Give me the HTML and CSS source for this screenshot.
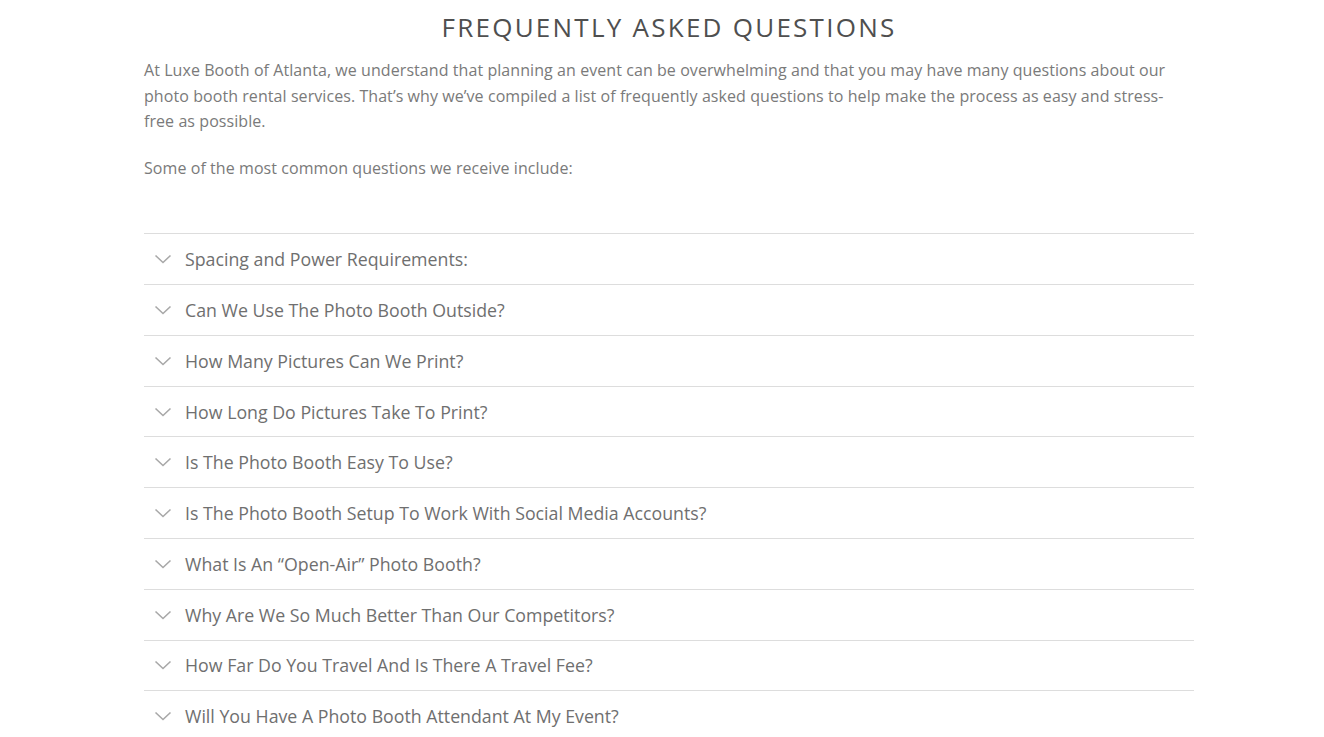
FILE: index.html
```html
<!DOCTYPE html>
<html lang="en">
<head>
<meta charset="utf-8">
<title>FAQ</title>
<link rel="stylesheet" href="styles.css">
</head>
<body>
<section class="faq">
  <h2 class="faq-title">FREQUENTLY ASKED QUESTIONS</h2>
  <p class="faq-text">At Luxe Booth of Atlanta, we understand that planning an event can be overwhelming and that you may have many questions about our photo booth rental services. That’s why we’ve compiled a list of frequently asked questions to help make the process as easy and stress-free as possible.</p>
  <p class="faq-text">Some of the most common questions we receive include:</p>
  <div class="accordion">
    <div class="item"><svg class="chev" viewBox="0 0 18 10"><path d="M1.5 1.5 L9 8.5 L16.5 1.5" /></svg><span>Spacing and Power Requirements:</span></div>
    <div class="item"><svg class="chev" viewBox="0 0 18 10"><path d="M1.5 1.5 L9 8.5 L16.5 1.5" /></svg><span>Can We Use The Photo Booth Outside?</span></div>
    <div class="item"><svg class="chev" viewBox="0 0 18 10"><path d="M1.5 1.5 L9 8.5 L16.5 1.5" /></svg><span>How Many Pictures Can We Print?</span></div>
    <div class="item"><svg class="chev" viewBox="0 0 18 10"><path d="M1.5 1.5 L9 8.5 L16.5 1.5" /></svg><span>How Long Do Pictures Take To Print?</span></div>
    <div class="item"><svg class="chev" viewBox="0 0 18 10"><path d="M1.5 1.5 L9 8.5 L16.5 1.5" /></svg><span>Is The Photo Booth Easy To Use?</span></div>
    <div class="item"><svg class="chev" viewBox="0 0 18 10"><path d="M1.5 1.5 L9 8.5 L16.5 1.5" /></svg><span>Is The Photo Booth Setup To Work With Social Media Accounts?</span></div>
    <div class="item"><svg class="chev" viewBox="0 0 18 10"><path d="M1.5 1.5 L9 8.5 L16.5 1.5" /></svg><span>What Is An “Open-Air” Photo Booth?</span></div>
    <div class="item"><svg class="chev" viewBox="0 0 18 10"><path d="M1.5 1.5 L9 8.5 L16.5 1.5" /></svg><span>Why Are We So Much Better Than Our Competitors?</span></div>
    <div class="item"><svg class="chev" viewBox="0 0 18 10"><path d="M1.5 1.5 L9 8.5 L16.5 1.5" /></svg><span>How Far Do You Travel And Is There A Travel Fee?</span></div>
    <div class="item"><svg class="chev" viewBox="0 0 18 10"><path d="M1.5 1.5 L9 8.5 L16.5 1.5" /></svg><span>Will You Have A Photo Booth Attendant At My Event?</span></div>
  </div>
</section>
</body>
</html>
```

FILE: styles.css
```css
html, body {
  margin: 0;
  padding: 0;
  background: #ffffff;
}
body {
  font-family: "Open Sans", "Liberation Sans", sans-serif;
  color: #7a7a7a;
}
.faq {
  width: 1050px;
  margin: 0 0 0 144px;
  padding-top: 8px;
}
.faq-title {
  margin: 0 0 12px;
  text-align: center;
  font-size: 26px;
  font-weight: 400;
  line-height: 38px;
  letter-spacing: 2.25px;
  color: #4f4f4f;
}
.faq-text {
  max-width: 1036px;
  margin: 0 0 21px;
  font-size: 16px;
  line-height: 25.6px;
  letter-spacing: 0.07px;
  color: #7a7a7a;
}
.accordion {
  margin-top: 52px;
}
.item {
  display: flex;
  align-items: center;
  gap: 13px;
  height: 49.78px;
  padding-left: 10px;
  border-top: 1px solid #dddddd;
  font-size: 17.75px;
  color: #6f6f6f;
}
.chev {
  width: 18px;
  height: 10px;
  fill: none;
  stroke: #a8a8a8;
  stroke-width: 1.6;
  flex: none;
}
```
